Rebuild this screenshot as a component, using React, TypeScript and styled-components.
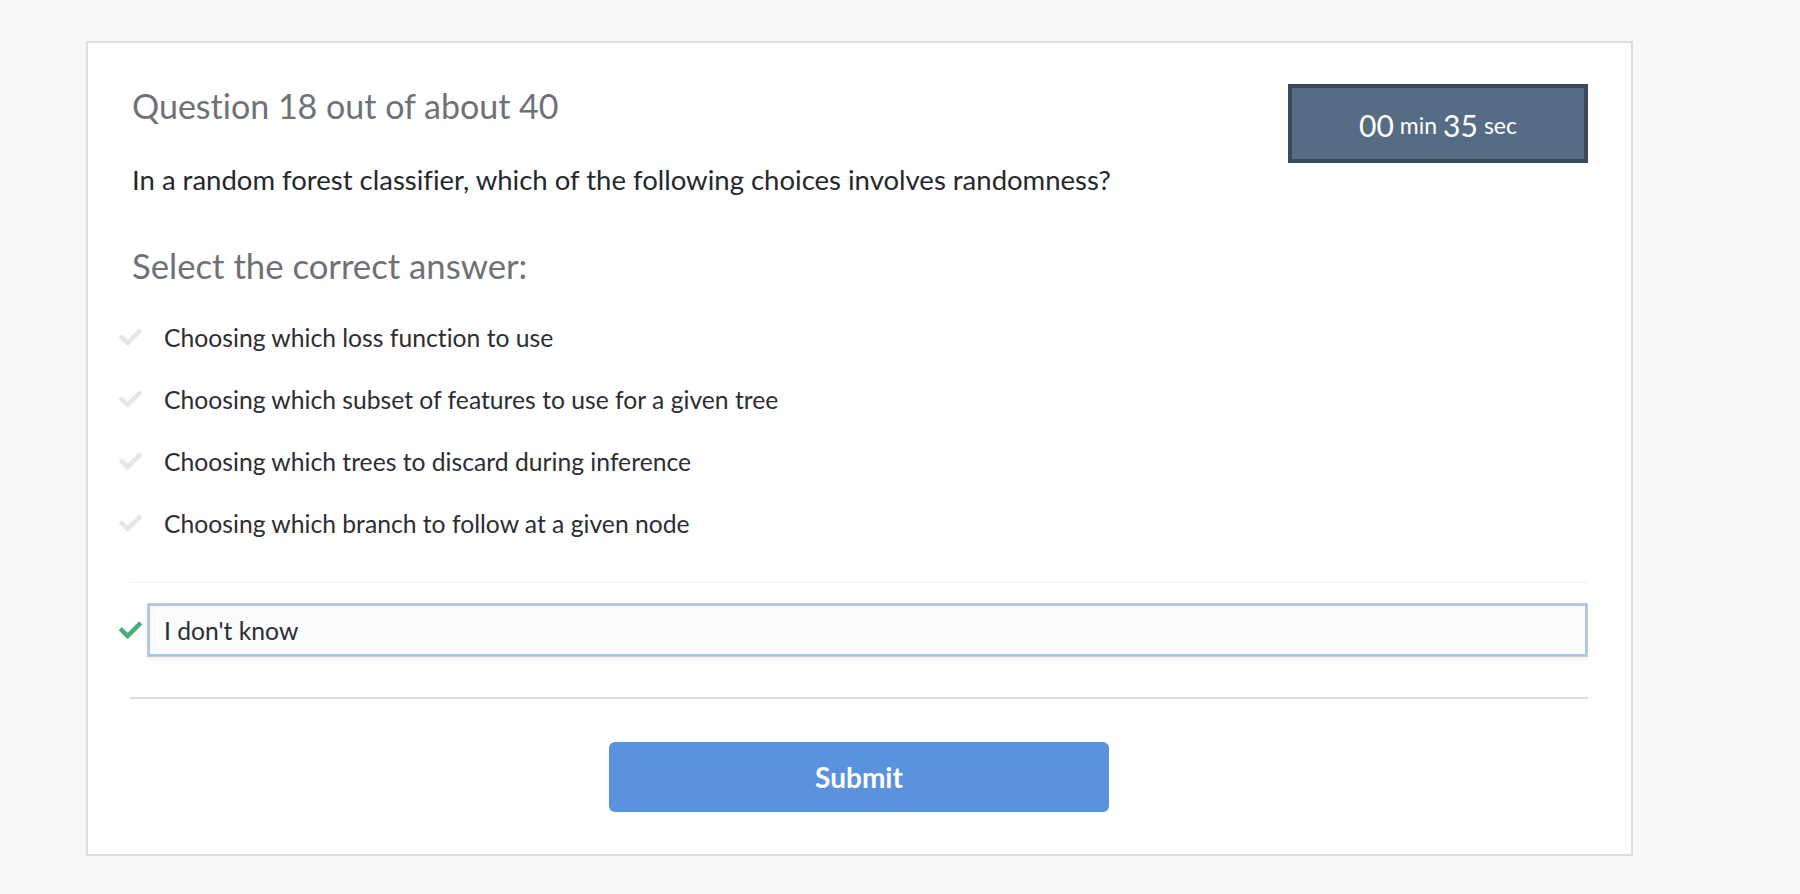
import React from "react";
import styled, { createGlobalStyle } from "styled-components";

const GlobalStyle = createGlobalStyle`
  html, body {
    margin: 0;
    padding: 0;
    background: #f6f7f9;
    font-family: Lato, "Open Sans", sans-serif;
    font-variant-ligatures: no-common-ligatures;
  }
`;

const Page = styled.div`
  padding: 41px 0 0 86px;
  min-height: 894px;
  box-sizing: border-box;
`;

const Card = styled.div`
  width: 1547px;
  height: 815px;
  box-sizing: border-box;
  background: #ffffff;
  border: 2px solid #dcdde0;
  padding: 41px 43px 0 42px;
  display: flex;
  flex-direction: column;
`;

const Header = styled.div`
  display: flex;
  justify-content: space-between;
  align-items: flex-start;
`;

const HeadText = styled.div`
  display: flex;
  flex-direction: column;
`;

const Title = styled.h1`
  margin: 0 0 0 2px;
  font-weight: 400;
  font-size: 34px;
  line-height: 44px;
  color: #6e7277;
`;

const QuestionText = styled.p`
  margin: 35px 0 0 2px;
  font-size: 27.5px;
  line-height: 34px;
  color: #25282c;
`;

const Timer = styled.div`
  width: 300px;
  height: 79px;
  box-sizing: border-box;
  background: #566c85;
  border: 4px solid #3a4a5d;
  display: flex;
  align-items: center;
  justify-content: center;
  gap: 6px;
  color: #ffffff;
  font-size: 30px;
  padding-top: 2px;
`;

const Unit = styled.span`
  font-size: 23px;
`;

const SectionLabel = styled.h2`
  margin: 49px 0 0 2px;
  font-weight: 400;
  font-size: 34.7px;
  line-height: 40px;
  color: #6e7277;
`;

const Options = styled.ul`
  list-style: none;
  margin: 31px 0 0 0;
  padding: 0 0 39px 0;
  display: flex;
  flex-direction: column;
  gap: 22px;
  border-bottom: 1px solid #f2f2f2;
`;

const OptionRow = styled.li`
  display: flex;
  align-items: center;
  height: 40px;
`;

const CheckBox = styled.span<{ $active?: boolean; $width: number }>`
  flex: none;
  width: ${(p) => p.$width}px;
  margin-left: -11px;
  display: flex;
  align-items: center;
  color: ${(p) => (p.$active ? "#4aae7a" : "#e6e6e6")};
`;

const OptionLabel = styled.span`
  font-size: 24.7px;
  color: #2b2e33;
`;

const KnowRow = styled.div`
  display: flex;
  align-items: center;
  margin-top: 20px;
`;

const KnowBox = styled.div`
  flex: 1;
  height: 54px;
  box-sizing: border-box;
  border: 1px solid #cccccc;
  box-shadow: inset 0 0 0 2px #a9c7ec, 0 2px 6px rgba(0, 0, 0, 0.06);
  background: #f9fbfd;
  display: flex;
  align-items: center;
  padding-left: 16px;
  font-size: 24.7px;
  color: #2b2e33;
`;

const Divider = styled.hr`
  margin: 40px 0 0 0;
  border: none;
  border-top: 2px solid #dedede;
`;

const Footer = styled.div`
  display: flex;
  justify-content: center;
  margin-top: 43px;
`;

const SubmitButton = styled.button`
  width: 500px;
  height: 70px;
  border: none;
  border-radius: 6px;
  background: #5b92dd;
  color: #ffffff;
  font-family: Lato, sans-serif;
  font-weight: 700;
  font-size: 28px;
  cursor: pointer;
`;

const Check = () => (
  <svg width="23" height="18" viewBox="0 0 512 400" aria-hidden="true">
    <path
      fill="currentColor"
      d="M173.9 389.3L7.5 222.9c-10-10-10-26.2 0-36.2l36.2-36.2c10-10 26.2-10 36.2 0L192 262.7 432.1 22.5c10-10 26.2-10 36.2 0l36.2 36.2c10 10 10 26.2 0 36.2L210.1 389.3c-10 10-26.2 10-36.2 0z"
    />
  </svg>
);

const options = [
  "Choosing which loss function to use",
  "Choosing which subset of features to use for a given tree",
  "Choosing which trees to discard during inference",
  "Choosing which branch to follow at a given node",
];

export default function App() {
  return (
    <>
      <GlobalStyle />
      <Page>
        <Card>
          <Header>
            <HeadText>
              <Title>Question 18 out of about 40</Title>
              <QuestionText>
                In a random forest classifier, which of the following choices involves randomness?
              </QuestionText>
            </HeadText>
            <Timer>
              <span>00</span>
              <Unit>min</Unit>
              <span>35</span>
              <Unit>sec</Unit>
            </Timer>
          </Header>
          <SectionLabel>Select the correct answer:</SectionLabel>
          <Options>
            {options.map((o) => (
              <OptionRow key={o}>
                <CheckBox $width={45}>
                  <Check />
                </CheckBox>
                <OptionLabel>{o}</OptionLabel>
              </OptionRow>
            ))}
          </Options>
          <KnowRow>
            <CheckBox $active $width={28}>
              <Check />
            </CheckBox>
            <KnowBox>I don't know</KnowBox>
          </KnowRow>
          <Divider />
          <Footer>
            <SubmitButton>Submit</SubmitButton>
          </Footer>
        </Card>
      </Page>
    </>
  );
}
